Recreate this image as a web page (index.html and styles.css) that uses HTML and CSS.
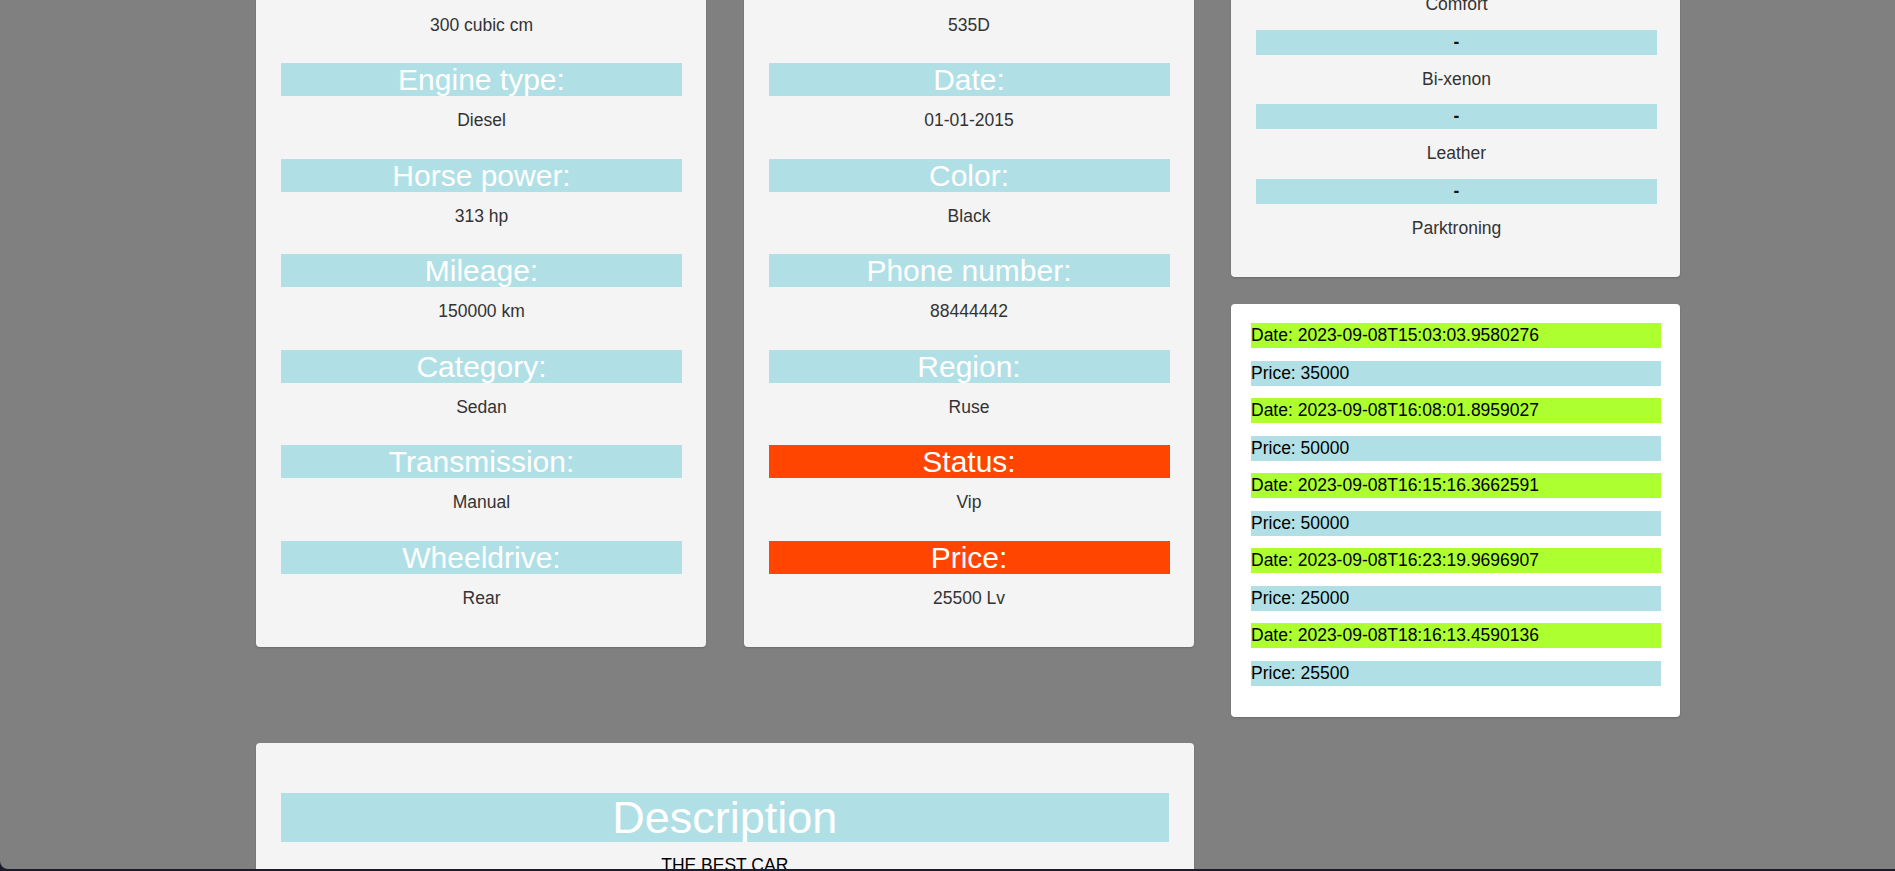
FILE: index.html
```html
<!DOCTYPE html>
<html lang="en">
<head>
<meta charset="utf-8">
<title>Car details</title>
<link rel="stylesheet" href="styles.css">
</head>
<body>
<div class="viewport">
  <div class="page">
    <div class="grid">
      <section class="card specs">
        <p class="value">300 cubic cm</p>
        <h2 class="label">Engine type:</h2>
        <p class="value">Diesel</p>
        <h2 class="label">Horse power:</h2>
        <p class="value">313 hp</p>
        <h2 class="label">Mileage:</h2>
        <p class="value">150000 km</p>
        <h2 class="label">Category:</h2>
        <p class="value">Sedan</p>
        <h2 class="label">Transmission:</h2>
        <p class="value">Manual</p>
        <h2 class="label">Wheeldrive:</h2>
        <p class="value">Rear</p>
      </section>

      <section class="card specs">
        <p class="value">535D</p>
        <h2 class="label">Date:</h2>
        <p class="value">01-01-2015</p>
        <h2 class="label">Color:</h2>
        <p class="value">Black</p>
        <h2 class="label">Phone number:</h2>
        <p class="value">88444442</p>
        <h2 class="label">Region:</h2>
        <p class="value">Ruse</p>
        <h2 class="label hot">Status:</h2>
        <p class="value">Vip</p>
        <h2 class="label hot">Price:</h2>
        <p class="value">25500 Lv</p>
      </section>

      <div class="side">
        <section class="card extras">
          <p class="value">Comfort</p>
          <p class="dash">-</p>
          <p class="value">Bi-xenon</p>
          <p class="dash">-</p>
          <p class="value">Leather</p>
          <p class="dash">-</p>
          <p class="value">Parktroning</p>
        </section>

        <section class="card history">
          <p class="bid date">Date: 2023-09-08T15:03:03.9580276</p>
          <p class="bid price">Price: 35000</p>
          <p class="bid date">Date: 2023-09-08T16:08:01.8959027</p>
          <p class="bid price">Price: 50000</p>
          <p class="bid date">Date: 2023-09-08T16:15:16.3662591</p>
          <p class="bid price">Price: 50000</p>
          <p class="bid date">Date: 2023-09-08T16:23:19.9696907</p>
          <p class="bid price">Price: 25000</p>
          <p class="bid date">Date: 2023-09-08T18:16:13.4590136</p>
          <p class="bid price">Price: 25500</p>
        </section>
      </div>

      <section class="card description">
        <h1 class="desc-title">Description</h1>
        <p class="desc-text">THE BEST CAR</p>
      </section>
    </div>
  </div>
</div>
</body>
</html>
```

FILE: styles.css
```css
html,
body {
  margin: 0;
  height: 100%;
  background: #1b1b2b;
}

body {
  font-family: "Liberation Sans", Arial, sans-serif;
}

.viewport {
  height: 869px;
  overflow: hidden;
  background: #808080;
  border-bottom-left-radius: 8px;
}

/* the page is shown scrolled down: the cards begin above the window */
.page {
  margin-top: -20px;
  padding-left: 256px;
}

.grid {
  display: grid;
  grid-template-columns: 450px 450px 449px;
  column-gap: 37.5px;
  row-gap: 26px;
  align-items: start;
}

.card {
  background: #f4f4f4;
  border-radius: 4px;
  box-shadow: 0 1px 2px rgba(0, 0, 0, 0.18);
}

.specs {
  padding: 32.5px 24px 11px 25px;
}

.label {
  margin: 0 0 12px;
  background: #b0e0e6;
  color: #fff;
  font-size: 30px;
  line-height: 33px;
  font-weight: normal;
  text-align: center;
}

.label.hot {
  background: #ff4500;
}

.value {
  margin: 0 0 25.5px;
  font-size: 17.5px;
  line-height: 25px;
  color: #333;
  text-align: center;
}

.side {
  display: flex;
  flex-direction: column;
  gap: 27px;
}

.extras {
  padding: 12px 23px 24px 25px;
}

.dash {
  margin: 0 0 12px;
  background: #b0e0e6;
  font-size: 17.5px;
  line-height: 25px;
  font-weight: bold;
  color: #111;
  text-align: center;
}

.extras .value {
  margin-bottom: 12.5px;
}

.history {
  background: #fff;
  padding: 19px 19px 18.5px 20px;
}

.bid {
  margin: 0 0 12.5px;
  font-size: 17.5px;
  line-height: 25px;
  color: #000;
}

.bid.date {
  background: #adff2f;
}

.bid.price {
  background: #b0e0e6;
}

.description {
  grid-column: 1 / 3;
  padding: 50px 25px 30px;
}

.desc-title {
  margin: 0 0 11px;
  background: #b0e0e6;
  color: #fff;
  font-size: 45px;
  line-height: 49px;
  font-weight: normal;
  text-align: center;
}

.desc-text {
  margin: 0;
  font-size: 17.5px;
  line-height: 25px;
  color: #000;
  text-align: center;
}
```
